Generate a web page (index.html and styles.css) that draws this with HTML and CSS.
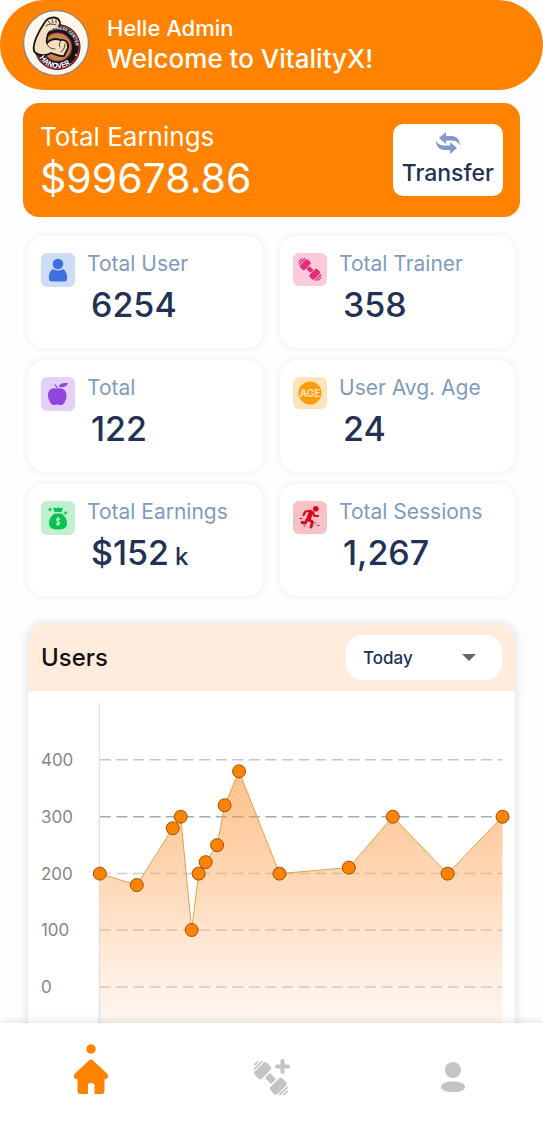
FILE: index.html
```html
<!DOCTYPE html>
<html lang="en">
<head>
<meta charset="utf-8">
<meta name="viewport" content="width=device-width, initial-scale=1">
<title>VitalityX</title>
<link rel="stylesheet" href="styles.css">
</head>
<body>
<div class="app">
  <main class="content">
    <header class="hero">
      <svg class="hero-logo" viewBox="0 0 66 66" role="img" aria-label="Hanover Fitness Center">
        <defs>
          <path id="arc-top" d="M27.500 21.500A17 17 0 0 1 47 49"/>
          <path id="arc-bottom" d="M16.700 47.800A20.800 20.800 0 0 0 53 47"/>
        </defs>
        <circle cx="33" cy="33" r="32.400" fill="#fff7ec" stroke="#8d8088" stroke-width="1.200"/>
        <circle cx="34.500" cy="37" r="23" fill="#15161a"/>
        <circle cx="34.500" cy="37" r="21.600" fill="none" stroke="#c8304a" stroke-width="1.200"/>
        <circle cx="34.500" cy="37" r="14" fill="#c08a4c" stroke="#c8304a" stroke-width="1.200"/>
        <path d="M22 12C25 7 33 6 36 10C38 13 37 17 33 19C30 19 27 21 25 24C24 28 23 31 24 33C27 29 33 28 37 30C42 29 46 32 45 38L41 46C37 47 32 44 28 43C22 47 13 45 11 41C9 34 14 26 17 20Z" fill="#f6dfbf" stroke="#15161a" stroke-width="1.800" stroke-linejoin="round"/>
        <path d="M24 33C24 36 27 39 32 39M38 31C36 33 36 35 37 37M42 34C42 38 40 41 38 42M23 16C26 13 30 14 33 15M25 11L27 13M29 9.500L30 12.500M33 10L33 13" fill="none" stroke="#15161a" stroke-width=".8" stroke-linecap="round"/>
        <text class="logo-small"><textPath href="#arc-top">FITNESS CENTER</textPath></text>
        <text class="logo-big"><textPath href="#arc-bottom">HANOVER</textPath></text>
        <circle cx="53" cy="45" r="1.200" fill="#e59a3c"/>
      </svg>
      <div>
        <p class="hero-name">Helle Admin</p>
        <h1 class="hero-title">Welcome to VitalityX!</h1>
      </div>
    </header>

    <section class="balance">
      <div>
        <h2 class="balance-label">Total Earnings</h2>
        <p class="balance-value">$99678.86</p>
      </div>
      <button class="transfer" type="button">
        <svg class="transfer-icon" viewBox="0 0 24 22" aria-hidden="true">
          <path d="M3 6L10 0V4H15C20 4 24 7 24 13.500 22 9.500 19 8.500 15 8.500H10V12Z"/>
          <path d="M21 16L14 22V18H9C4 18 0 15 0 8.500 2 12.500 5 13.500 9 13.500H14V10Z"/>
        </svg>
        Transfer
      </button>
    </section>

    <section class="stats">
      <article class="stat">
        <svg class="stat-icon" viewBox="0 0 34 34" aria-hidden="true">
          <rect width="34" height="34" rx="6" fill="#cfdcf8"/>
          <circle cx="17" cy="11" r="5.300" fill="#3b70dd"/>
          <path d="M12 16Q17 19 22 16C25 18 26.500 21 26 26Q26 28.500 23 28.500H11Q8 28.500 8 26C7.500 21 9 18 12 16Z" fill="#3b70dd"/>
        </svg>
        <div><h3 class="stat-label">Total User</h3><p class="stat-value">6254</p></div>
      </article>
      <article class="stat">
        <svg class="stat-icon" viewBox="0 0 34 34" aria-hidden="true">
          <rect width="34" height="33" rx="6" fill="#fbcbdc"/>
          <g transform="translate(17 16.500) rotate(45)" fill="#e72c72">
            <rect x="-2.800" y="-2.200" width="5.600" height="4.400" rx="1"/>
            <rect x="-10" y="-5.500" width="6.600" height="11" rx="2"/>
            <rect x="3.400" y="-5.500" width="6.600" height="11" rx="2"/>
            <rect x="-12.200" y="-4.500" width="1.400" height="9" rx=".7"/>
            <rect x="10.800" y="-4.500" width="1.400" height="9" rx=".7"/>
            <rect x="-14" y="-2.500" width="1.100" height="5" rx=".5"/>
            <rect x="12.900" y="-2.500" width="1.100" height="5" rx=".5"/>
          </g>
        </svg>
        <div><h3 class="stat-label">Total Trainer</h3><p class="stat-value">358</p></div>
      </article>
      <article class="stat">
        <svg class="stat-icon" viewBox="0 0 34 34" aria-hidden="true">
          <rect width="34" height="34" rx="6" fill="#e3d1f8"/>
          <path d="M16 12C11 9.500 7 13 7 18 7 23 10 28 13 28 15 28 15 27.500 16 27.500S18 28 20 28C23 28 25.500 23 25.500 18 25.500 13 21 9.500 16 12Z" fill="#8f45de"/>
          <path d="M18 10C18 6.500 22 5.500 27 6 26 9.500 22 11 18 10Z" fill="#8f45de"/>
          <path d="M16.500 12Q16 9 13.500 7.500" fill="none" stroke="#8f45de" stroke-width="1.300"/>
        </svg>
        <div><h3 class="stat-label">Total</h3><p class="stat-value">122</p></div>
      </article>
      <article class="stat">
        <svg class="stat-icon" viewBox="0 0 34 34" aria-hidden="true">
          <rect width="34" height="32" rx="6" fill="#ffe4bb"/>
          <circle cx="17" cy="16" r="11.500" fill="#ff9d0a"/>
          <text class="age-text" x="17" y="20" text-anchor="middle">AGE</text>
        </svg>
        <div><h3 class="stat-label">User Avg. Age</h3><p class="stat-value">24</p></div>
      </article>
      <article class="stat">
        <svg class="stat-icon" viewBox="0 0 34 34" aria-hidden="true">
          <rect width="34" height="34" rx="6" fill="#bff0d0"/>
          <g fill="#06c24e">
            <path d="M12 6.500Q14.500 7.500 17 6.500 19.500 7.500 22 6.500L20.500 11H13.500Z"/>
            <path d="M13.500 12.500H20.500C24 15 26 18 26 22 26 26.500 23 28.500 17 28.500S8 26.500 8 22C8 18 10 15 13.500 12.500Z"/>
            <path d="M9 6L9.700 7.800 11.500 8.500 9.700 9.200 9 11 8.300 9.200 6.500 8.500 8.300 7.800ZM24.500 9.500L25.200 11.300 27 12 25.200 12.700 24.500 14.500 23.800 12.700 22 12 23.800 11.300Z"/>
          </g>
          <path d="M19 18.500Q17 16.800 15.600 18.300C14.800 20.500 19 20 18.700 22.200 18 24 16 23.500 15 22.500M17 16V25" fill="none" stroke="#bff0d0" stroke-width="1.300"/>
        </svg>
        <div><h3 class="stat-label">Total Earnings</h3><p class="stat-value">$152<span class="stat-unit">k</span></p></div>
      </article>
      <article class="stat">
        <svg class="stat-icon" viewBox="0 0 34 34" aria-hidden="true">
          <rect width="34" height="33" rx="6" fill="#f8c1c5"/>
          <circle cx="22.800" cy="7.800" r="2.800" fill="#d60a1c"/>
          <g fill="none" stroke="#d60a1c" stroke-linecap="round" stroke-linejoin="round">
            <path d="M18 11.500L15.500 18" stroke-width="4.600"/>
            <path d="M17 9.800L12.500 10.500 10.500 14M20 11.500L21.500 15H25" stroke-width="2.200"/>
            <path d="M15.500 18.500L19.500 21 18 26M14 18.500L12.500 22 9 21.500" stroke-width="2.800"/>
            <path d="M7 17.500H9M11 25H12M22 22H23M24.500 24.500H26" stroke-width="1"/>
          </g>
        </svg>
        <div><h3 class="stat-label">Total Sessions</h3><p class="stat-value">1,267</p></div>
      </article>
    </section>

    <section class="chart-card">
      <div class="chart-head">
        <h2 class="chart-title">Users</h2>
        <div class="period">
          <select class="period-select" aria-label="Period">
            <option>Today</option>
            <option>Week</option>
            <option>Month</option>
          </select>
          <svg class="period-arrow" viewBox="0 0 14 7" aria-hidden="true"><path d="M0 0H14L7 7Z"/></svg>
        </div>
      </div>
      <svg class="chart" viewBox="0 0 488 372" role="img" aria-label="Users chart">
        <defs>
          <linearGradient id="fill" gradientUnits="userSpaceOnUse" x1="0" y1="80" x2="0" y2="352">
            <stop offset="0" stop-color="#ff8a24" stop-opacity=".54"/>
            <stop offset=".4" stop-color="#ff9233" stop-opacity=".36"/>
            <stop offset=".75" stop-color="#ff9840" stop-opacity=".16"/>
            <stop offset="1" stop-color="#ff8a50" stop-opacity=".05"/>
          </linearGradient>
        </defs>
        <path class="axis" d="M71.500 12V352"/>
        <path class="grid" d="M72 69H475"/>
        <path class="grid grid-strong" d="M72 126H475"/>
        <path class="grid grid-soft" d="M72 183H475M72 239.500H475M72 296.500H475"/>
        <path fill="url(#fill)" d="M72 183L109 194.500 145 137.500 153 126 164 239.500 171 183 178 171.500 189.500 154.500 197 114.500 211.500 80.500 252 183 321.500 177 365.500 126 420.500 183 475.500 126V352H72Z"/>
        <path class="line" d="M72 183L109 194.500 145 137.500 153 126 164 239.500 171 183 178 171.500 189.500 154.500 197 114.500 211.500 80.500 252 183 321.500 177 365.500 126 420.500 183 475.500 126"/>
        <g class="dots">
          <circle cx="72" cy="183" r="6.500"/><circle cx="109" cy="194.500" r="6.500"/><circle cx="145" cy="137.500" r="6.500"/>
          <circle cx="153" cy="126" r="6.500"/><circle cx="164" cy="239.500" r="6.500"/><circle cx="171" cy="183" r="6.500"/>
          <circle cx="178" cy="171.500" r="6.500"/><circle cx="189.500" cy="154.500" r="6.500"/><circle cx="197" cy="114.500" r="6.500"/>
          <circle cx="211.500" cy="80.500" r="6.500"/><circle cx="252" cy="183" r="6.500"/><circle cx="321.500" cy="177" r="6.500"/>
          <circle cx="365.500" cy="126" r="6.500"/><circle cx="420.500" cy="183" r="6.500"/><circle cx="475.500" cy="126" r="6.500"/>
        </g>
        <g class="ticks">
          <text x="13" y="75">400</text>
          <text x="13" y="132">300</text>
          <text x="13" y="189">200</text>
          <text x="13" y="246">100</text>
          <text x="13" y="303">0</text>
        </g>
      </svg>
    </section>
  </main>

  <nav class="tabs" aria-label="Main">
    <a class="tab" href="#home" aria-label="Home" aria-current="page">
      <svg class="tab-icon tab-home" viewBox="0 0 36 52" aria-hidden="true">
        <circle cx="18" cy="6" r="4.700"/>
        <path d="M16.500 17Q18 15.500 19.500 17L34 30.500Q36.500 33.500 33.500 36H31.500V48Q31.500 51 28.500 51H21.500V42.500Q21.500 40 18 40T15 42.500V51H7.500Q4.500 51 4.500 48V36H2.500Q-.5 33.500 2 30.500Z"/>
      </svg>
    </a>
    <a class="tab" href="#workouts" aria-label="Workouts">
      <svg class="tab-icon tab-workout" viewBox="0 0 36 36" aria-hidden="true">
        <g transform="translate(16.500 19.500) rotate(45)">
          <rect x="-4.500" y="-3.500" width="9" height="7" rx="1.500"/>
          <rect x="-16" y="-8.500" width="10" height="17" rx="3"/>
          <rect x="6" y="-8.500" width="10" height="17" rx="3"/>
          <rect x="-19" y="-6.500" width="1.800" height="13" rx=".9"/>
          <rect x="17.200" y="-6.500" width="1.800" height="13" rx=".9"/>
          <rect x="-21.800" y="-3.500" width="1.500" height="7" rx=".7"/>
          <rect x="20.300" y="-3.500" width="1.500" height="7" rx=".7"/>
        </g>
        <path d="M28.500 2V13M23 7.500H34" fill="none" stroke="currentColor" stroke-width="4" stroke-linecap="round"/>
      </svg>
    </a>
    <a class="tab" href="#profile" aria-label="Profile">
      <svg class="tab-icon tab-profile" viewBox="0 0 24 30" aria-hidden="true">
        <circle cx="12" cy="8" r="8"/>
        <path d="M0 25C0 17.800 24 17.800 24 25S0 32 0 25Z"/>
      </svg>
    </a>
  </nav>
</div>
</body>
</html>
```
FILE: styles.css
```css
* {
  box-sizing: border-box;
}

body {
  margin: 0;
  background: #fefefe;
  color: #223154;
  font-family: Inter, "Open Sans", sans-serif;
}

h1, h2, h3, p {
  margin: 0;
  font-weight: 400;
}

.app {
  display: flex;
  flex-direction: column;
  height: 100vh;
}

.content {
  flex: 1;
  min-height: 0;
  overflow-y: auto;
  scrollbar-width: none;
}

.hero {
  display: flex;
  align-items: center;
  gap: 18px;
  padding: 10px 23px 14px;
  border-radius: 48px;
  background: #ff8200;
  color: #fff;
}

.hero-logo {
  flex: none;
  width: 66px;
  height: 66px;
}

.logo-small,
.logo-big {
  fill: #fff;
  font-weight: 700;
}

.logo-small {
  font-size: 4px;
}

.logo-big {
  font-size: 7px;
}

.hero-name {
  padding-top: 4px;
  font-size: 22px;
  font-weight: 500;
  line-height: 28px;
}

.hero-title {
  font-size: 26px;
  font-weight: 500;
  line-height: 34px;
}

.balance {
  display: flex;
  align-items: center;
  justify-content: space-between;
  margin: 13px 23px 19px;
  padding: 16px 17px;
  border-radius: 16px;
  background: #ff8200;
  color: #fff;
}

.balance-label {
  font-size: 26px;
  font-weight: 400;
  line-height: 36px;
}

.balance-value {
  font-size: 41px;
  line-height: 46px;
}

.transfer {
  display: flex;
  flex-direction: column;
  align-items: center;
  gap: 4px;
  padding: 8px 9px;
  border: 0;
  border-radius: 10px;
  background: #fff;
  color: #223154;
  font: 500 23px/30px Inter, "Open Sans", sans-serif;
}

.transfer-icon {
  width: 24px;
  height: 22px;
  fill: #7f9cc6;
}

.stats {
  display: grid;
  grid-template-columns: 1fr 1fr;
  gap: 12px 17px;
  margin: 0 28px 28px;
}

.stat {
  display: flex;
  gap: 12px;
  padding: 13px;
  border-radius: 17px;
  background: #fff;
  box-shadow: 0 0 6px 2px #f3f3f3;
}

.stat-icon {
  flex: none;
  width: 34px;
  height: 34px;
  margin-top: 4px;
}

.age-text {
  fill: #ffe4bb;
  font-size: 10px;
  font-weight: 700;
}

.stat-label {
  color: #7f9bbe;
  font-size: 21px;
  line-height: 30px;
}

.stat-value {
  padding: 0 4px;
  font-size: 34px;
  font-weight: 500;
  line-height: 52px;
  margin-bottom: 4px;
}

.stat-unit {
  margin-left: 6px;
  font-size: 24px;
  line-height: 24px;
}

.chart-card {
  margin: 0 28px;
  border-radius: 17px;
  background: #fff;
  box-shadow: 0 0 6px 3px #e9eaec;
}

.chart-head {
  display: flex;
  align-items: center;
  justify-content: space-between;
  padding: 11px 13px;
  border-radius: 17px 17px 0 0;
  background: #ffecdd;
}

.chart-title {
  color: #14110f;
  font-size: 24px;
  font-weight: 500;
  line-height: 32px;
}

.period {
  position: relative;
}

.period-select {
  display: block;
  width: 156px;
  height: 45px;
  padding: 0 17px;
  border: 0;
  border-radius: 17px;
  appearance: none;
  background: #fff;
  color: #223154;
  font: 500 17px/24px Inter, "Open Sans", sans-serif;
}

.period-arrow {
  position: absolute;
  top: 19px;
  right: 26px;
  width: 14px;
  height: 7px;
  fill: #666;
  pointer-events: none;
}

.chart {
  display: block;
  width: 100%;
  height: auto;
}

.axis {
  stroke: #e3e5e8;
  stroke-width: 1.500;
}

.grid {
  stroke: #c4c8c8;
  stroke-width: 1.500;
  stroke-dasharray: 11 5.600;
}

.grid-strong {
  stroke: #a3adad;
}

.grid-soft {
  stroke: #cfd1d1;
}

.line {
  fill: none;
  stroke: #e0a24a;
  stroke-width: 1;
}

.dots {
  fill: #ff8200;
  stroke: #9c4f08;
  stroke-width: 1;
}

.ticks {
  fill: #868686;
  font-size: 17px;
}

.tabs {
  position: relative;
  display: grid;
  grid-template-columns: repeat(3, 1fr);
  padding: 18px 0 30px;
  background: #fff;
  box-shadow: 0 -2px 8px #0000001a;
}

.tab {
  display: flex;
  align-items: flex-end;
  justify-content: center;
  height: 54px;
  color: #c4c4c4;
}

.tab[aria-current] {
  color: #ff8200;
}

.tab-icon {
  fill: currentColor;
}

.tab-home {
  width: 36px;
  height: 52px;
}

.tab-workout {
  width: 36px;
  height: 36px;
}

.tab-profile {
  width: 24px;
  height: 30px;
  margin-bottom: 3px;
}
```
